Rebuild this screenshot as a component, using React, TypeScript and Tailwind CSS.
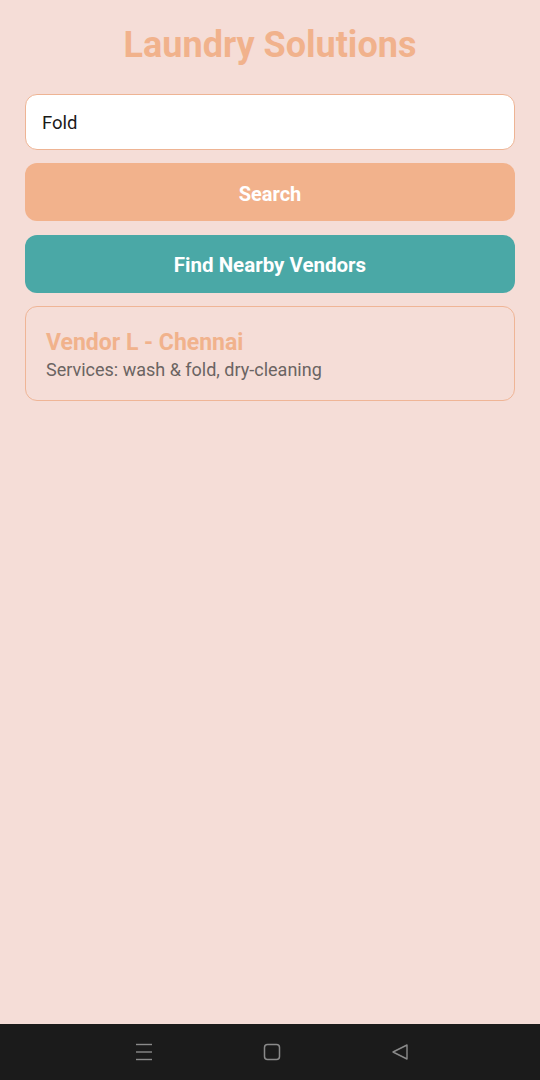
export default function App() {
  return (
    <div className="w-[540px] h-[1080px] flex flex-col bg-[#f5ddd7]" style={{ fontFamily: "Roboto, 'Noto Sans', sans-serif" }}>
      <div className="flex-1 flex flex-col px-[25px] pt-[23px]">
        <h1 className="text-center text-[36px] leading-[44px] font-bold text-[#f1b28c]">Laundry Solutions</h1>
        <div className="mt-[27px] h-[56px] rounded-[12px] border border-[#eeb494] bg-white flex items-center px-[16px] pt-[3px] text-[18.5px] text-[#1a1a1a]">
          Fold
        </div>
        <button className="mt-[13px] h-[58px] rounded-[12px] bg-[#f2b28c] pt-[3px] text-white text-[20px] font-bold">Search</button>
        <button className="mt-[14px] h-[58px] rounded-[12px] bg-[#4aa8a6] pt-[2px] text-white text-[20.5px] font-bold">Find Nearby Vendors</button>
        <div className="mt-[13px] h-[95px] rounded-[12px] border border-[#efb596] px-[20px] pt-[22px]">
          <div className="text-[23px] leading-[28px] font-bold text-[#f1b28c]">Vendor L - Chennai</div>
          <div className="mt-[1px] text-[18px] leading-[24px] text-[#6b6462]">Services: wash &amp; fold, dry-cleaning</div>
        </div>
      </div>
      <div className="h-[56px] bg-[#1b1b1b] flex items-center justify-center gap-[110px] pl-[4px]">
        <svg width="18" height="18" viewBox="0 0 18 18">
          <g stroke="#8a8a8a" strokeWidth="1.4">
            <line x1="1" y1="1.5" x2="17" y2="1.5" />
            <line x1="1" y1="9" x2="17" y2="9" />
            <line x1="1" y1="16.5" x2="17" y2="16.5" />
          </g>
        </svg>
        <svg width="18" height="18" viewBox="0 0 18 18">
          <rect x="1.5" y="1.5" width="15" height="15" rx="3" fill="none" stroke="#8a8a8a" strokeWidth="1.5" />
        </svg>
        <svg width="18" height="18" viewBox="0 0 18 18">
          <path d="M16 2 L2 9 L16 16 Z" fill="none" stroke="#8a8a8a" strokeWidth="1.4" strokeLinejoin="round" />
        </svg>
      </div>
    </div>
  );
}
